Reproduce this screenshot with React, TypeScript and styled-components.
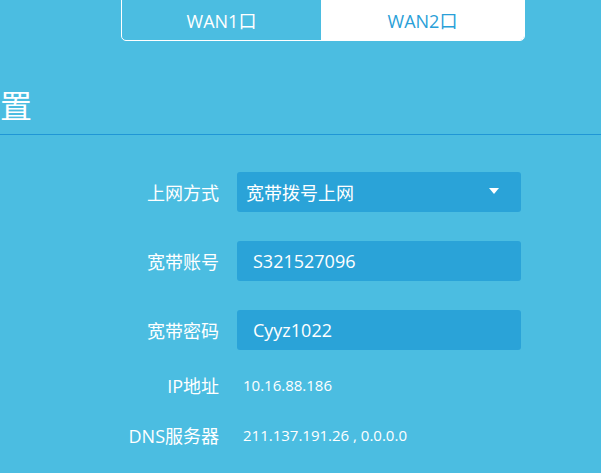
import React from "react";
import styled, { createGlobalStyle } from "styled-components";

const Global = createGlobalStyle`
  html, body { margin: 0; padding: 0; background: #4bbde1; }
  body { font-family: "Open Sans", "Noto Sans CJK SC", sans-serif; }
`;

const Page = styled.div`
  width: 601px;
  height: 473px;
  overflow: hidden;
  background: #4bbde1;
  color: #ffffff;
`;

const TabBar = styled.div`
  display: flex;
  width: 404px;
  height: 47px;
  margin: -6px 0 0 121px;
  box-sizing: border-box;
  border: 1px solid #ffffff;
  border-radius: 5px;
  overflow: hidden;
`;

const Tab = styled.div<{ $active?: boolean }>`
  display: flex;
  align-items: center;
  justify-content: center;
  padding-top: 5px;
  box-sizing: border-box;
  font-size: 18px;
  ${(p) =>
    p.$active
      ? `width: 199px; background: transparent; color: #ffffff;`
      : `flex: 1; background: #ffffff; color: #2a9fd8;`}
`;

const Heading = styled.h1`
  margin: 45px 0 0 -96px;
  font-family: "Noto Sans CJK SC", sans-serif;
  font-size: 32px;
  font-weight: 400;
  line-height: 36px;
  white-space: nowrap;
`;

const Divider = styled.div`
  height: 1px;
  background: #1f96d6;
  margin-top: 12px;
`;

const Form = styled.div`
  display: flex;
  flex-direction: column;
  padding-top: 37px;
`;

const Row = styled.div<{ $h: number; $gap: number }>`
  display: flex;
  align-items: center;
  height: ${(p) => p.$h}px;
  margin-top: ${(p) => p.$gap}px;
`;

const Label = styled.div`
  width: 219px;
  text-align: right;
  font-size: 18px;
  margin-right: 18px;
  white-space: nowrap;
`;

const Field = styled.div<{ $pad: number }>`
  position: relative;
  display: flex;
  align-items: center;
  width: 284px;
  height: 40px;
  box-sizing: border-box;
  padding-left: ${(p) => p.$pad}px;
  background: #2aa3d8;
  border-radius: 3px;
  font-size: 18px;
`;

const Caret = styled.span`
  position: absolute;
  right: 22px;
  top: 16px;
  width: 0;
  height: 0;
  border-left: 5px solid transparent;
  border-right: 5px solid transparent;
  border-top: 6px solid #ffffff;
`;

const Value = styled.div`
  font-size: 15px;
  padding-left: 6px;
  white-space: nowrap;
`;

export default function App() {
  return (
    <Page>
      <Global />
      <TabBar>
        <Tab $active>WAN1口</Tab>
        <Tab>WAN2口</Tab>
      </TabBar>
      <Heading>上网设置</Heading>
      <Divider />
      <Form>
        <Row $h={40} $gap={0}>
          <Label>上网方式</Label>
          <Field $pad={9}>
            宽带拨号上网
            <Caret />
          </Field>
        </Row>
        <Row $h={40} $gap={29}>
          <Label>宽带账号</Label>
          <Field $pad={16}>S321527096</Field>
        </Row>
        <Row $h={40} $gap={29}>
          <Label>宽带密码</Label>
          <Field $pad={16}>Cyyz1022</Field>
        </Row>
        <Row $h={30} $gap={20}>
          <Label>IP地址</Label>
          <Value>10.16.88.186</Value>
        </Row>
        <Row $h={30} $gap={20}>
          <Label>DNS服务器</Label>
          <Value>211.137.191.26 , 0.0.0.0</Value>
        </Row>
      </Form>
    </Page>
  );
}
